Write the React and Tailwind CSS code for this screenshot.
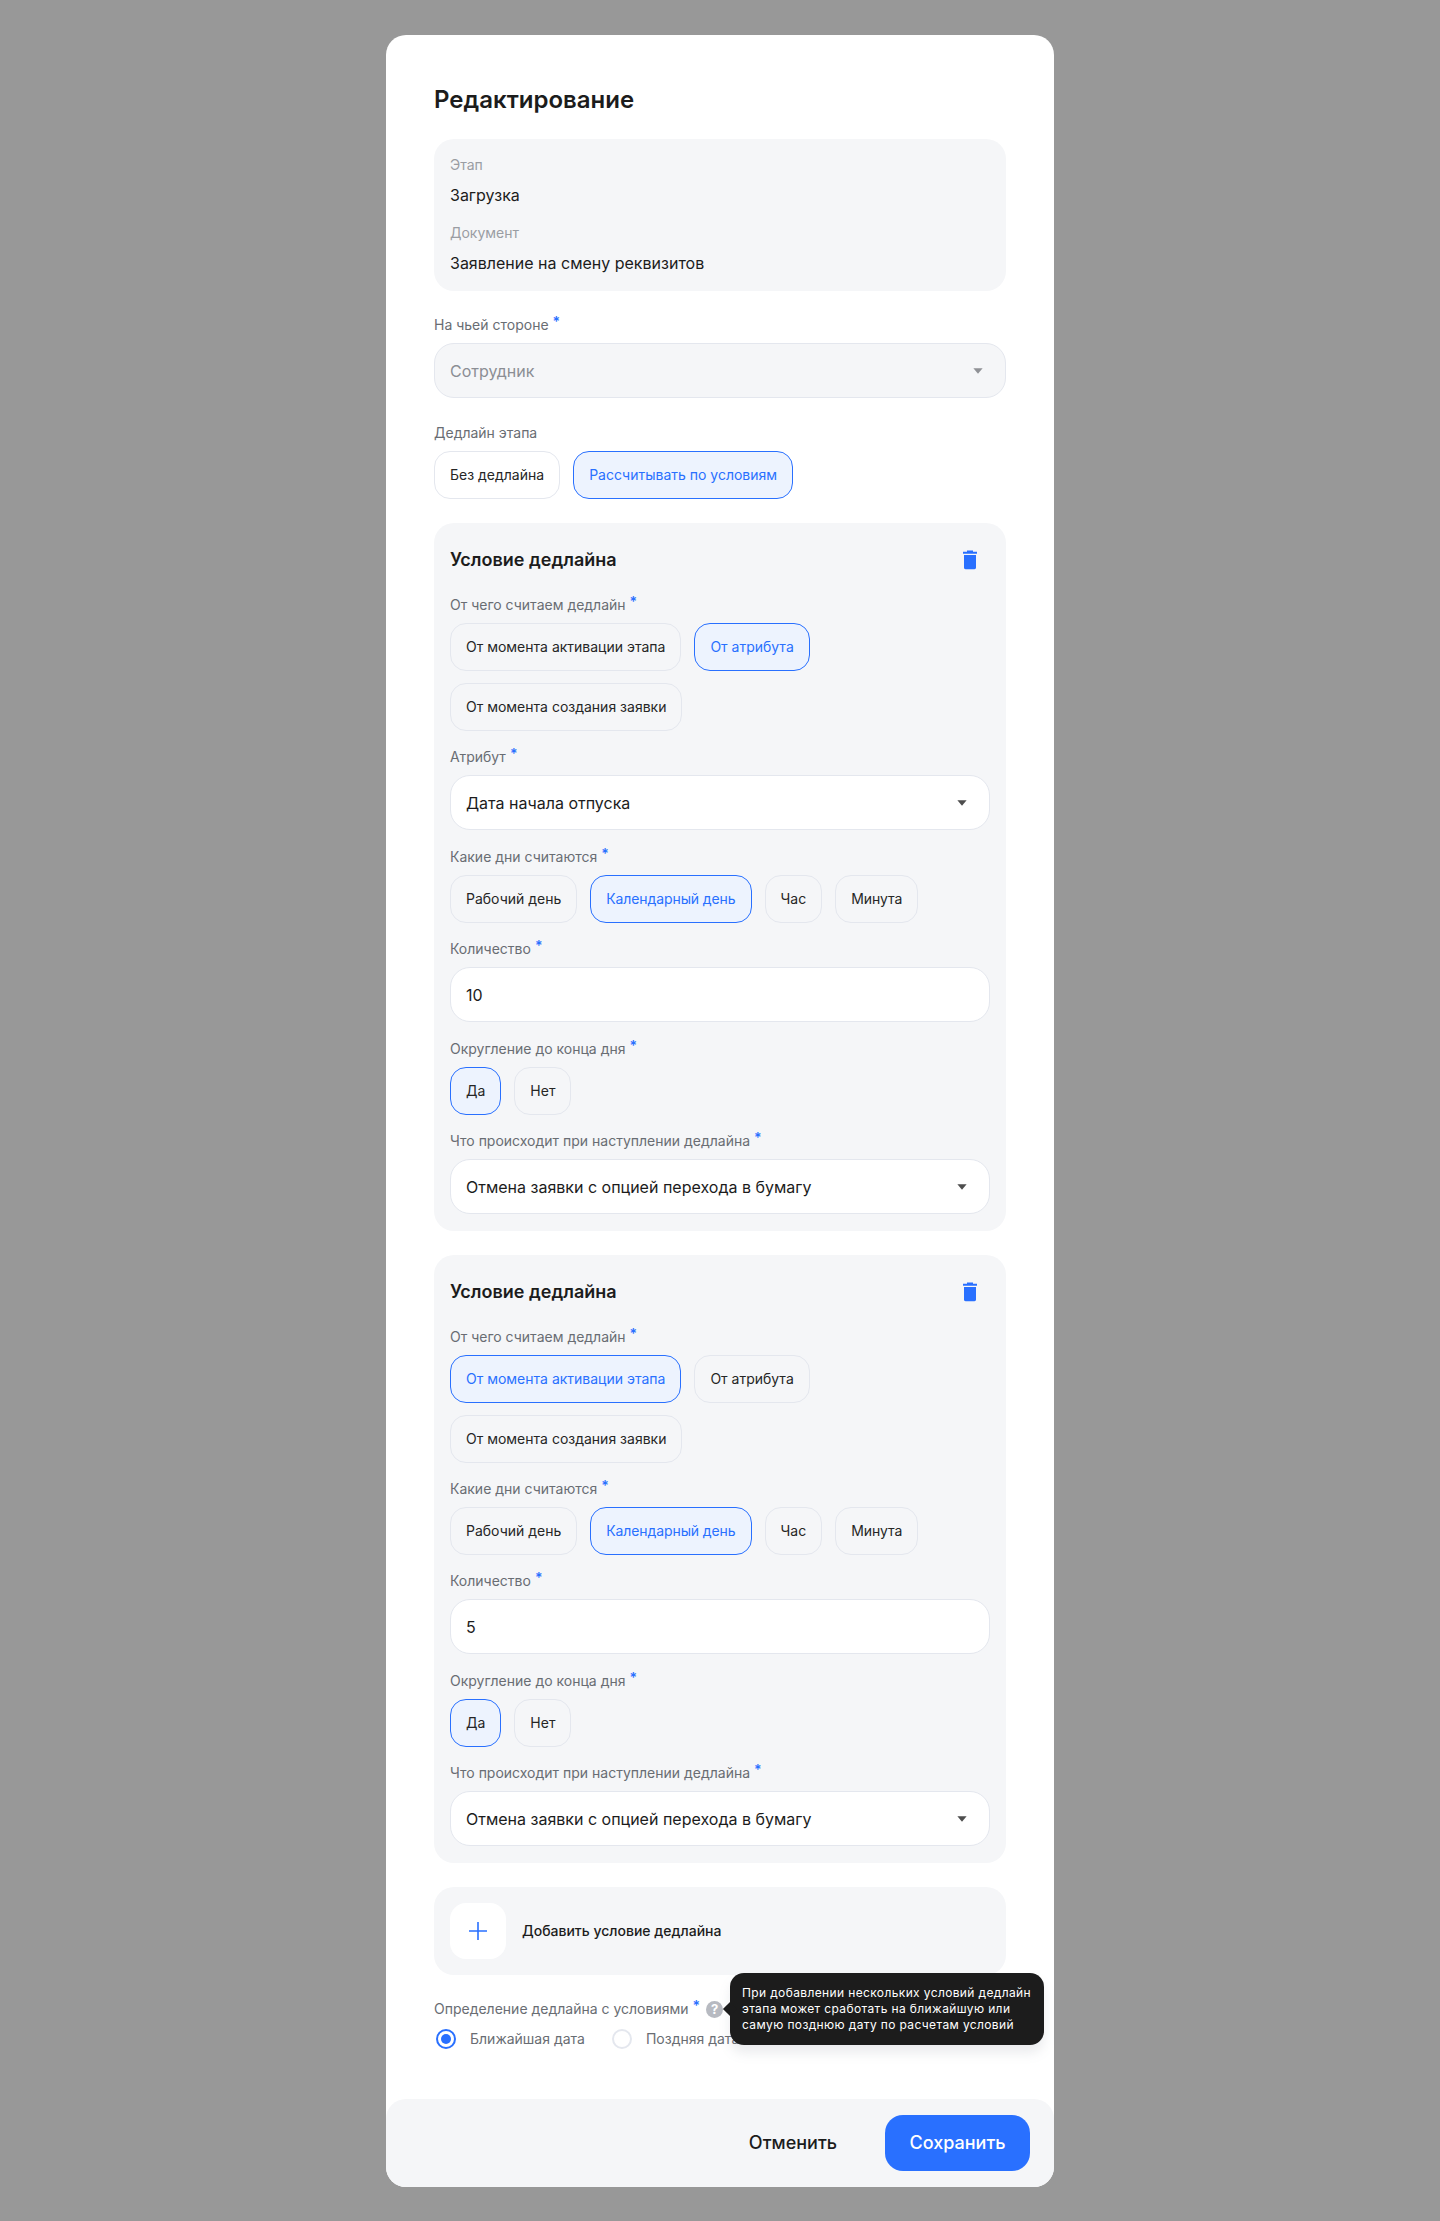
import React from "react";

const font = { fontFamily: '"Inter", "Liberation Sans", sans-serif' };

function Label({ children, className = "" }) {
  return (
    <div className={"flex h-5 items-center text-[14px] leading-5 text-[#696d73] " + className}>
      <span>{children}</span>
      <span className="ml-1 self-start text-[14px] leading-[14px] font-semibold text-[#2970ff]">*</span>
    </div>
  );
}

function Chip({ children, active, dark, white, className = "" }) {
  const cls = active
    ? "border-[#2970ff] bg-[#edf3fe] " + (dark ? "text-[#262626]" : "text-[#2970ff]")
    : "border-[#e4e7ee] text-[#262626] " + (white ? "bg-white" : "bg-transparent");
  return (
    <div className={"flex h-12 items-center rounded-2xl border px-[15px] text-[14px] leading-5 " + cls + " " + className}>
      {children}
    </div>
  );
}

function Triangle({ color = "#4d4d4d" }) {
  return (
    <svg width="10" height="6" viewBox="0 0 10 6" className="shrink-0">
      <path d="M0.4 0.3H9.6L5 5.7Z" fill={color} />
    </svg>
  );
}

function Select({ value }) {
  return (
    <div className="mt-2 mb-[17px] flex h-[55px] items-center justify-between rounded-[20px] border border-[#e4e7ee] bg-white pl-[15px] pr-[22px] text-[16px] leading-6 text-[#1c1c1c]">
      <span>{value}</span>
      <Triangle />
    </div>
  );
}

function Trash() {
  return (
    <svg width="16" height="20" viewBox="0 0 16 20" className="mr-3">
      <path
        d="M5 0.6H11V1.8H15V3.8H1V1.8H5ZM2 5H14V17.6C14 18.6 13.4 19.2 12.4 19.2H3.6C2.6 19.2 2 18.6 2 17.6Z"
        fill="#2970ff"
      />
    </svg>
  );
}

function Condition({ attribute, amount, source }) {
  return (
    <section className="rounded-[20px] bg-[#f5f6f8] px-4 pt-6">
      <div className="mb-[22px] flex h-[26px] items-center justify-between">
        <h2 className="text-[18px] leading-[26px] font-semibold text-[#1c1c1c]">Условие дедлайна</h2>
        <Trash />
      </div>
      <Label>От чего считаем дедлайн</Label>
      <div className="mt-2 mb-4 flex flex-wrap gap-x-[13px] gap-y-3">
        <Chip active={source === "stage"}>От момента активации этапа</Chip>
        <Chip active={source === "attr"}>От атрибута</Chip>
        <Chip>От момента создания заявки</Chip>
      </div>
      {attribute && (
        <>
          <Label>Атрибут</Label>
          <Select value={attribute} />
        </>
      )}
      <Label>Какие дни считаются</Label>
      <div className="mt-2 mb-4 flex gap-[13px]">
        <Chip>Рабочий день</Chip>
        <Chip active className="tracking-[-0.1px]">Календарный день</Chip>
        <Chip>Час</Chip>
        <Chip className="tracking-[-0.1px]">Минута</Chip>
      </div>
      <Label>Количество</Label>
      <div className="mt-2 mb-[17px] flex h-[55px] items-center rounded-[20px] border border-[#e4e7ee] bg-white px-[15px] text-[16px] leading-6 text-[#1c1c1c]">
        {amount}
      </div>
      <Label>Округление до конца дня</Label>
      <div className="mt-2 mb-4 flex gap-[13px]">
        <Chip active dark>Да</Chip>
        <Chip>Нет</Chip>
      </div>
      <Label>Что происходит при наступлении дедлайна</Label>
      <Select value="Отмена заявки с опцией перехода в бумагу" />
    </section>
  );
}

function Radio({ checked, children }) {
  return (
    <div className="flex items-center gap-[14px]">
      <span
        className={
          "flex h-5 w-5 items-center justify-center rounded-full border-2 " +
          (checked ? "border-[#2970ff]" : "border-[#e4e7ee]")
        }
      >
        {checked && <span className="h-[10px] w-[10px] rounded-full bg-[#2970ff]" />}
      </span>
      <span className="text-[14px] leading-5 text-[#696d73]">{children}</span>
    </div>
  );
}

export default function App() {
  return (
    <div style={font} className="h-[2221px] bg-[#989898] pt-[35px]">
      <div className="ml-[386px] flex h-[2152px] w-[668px] flex-col rounded-[20px] bg-white">
        <div className="px-12 pt-12">
          <h1 className="text-[24px] leading-[34px] font-semibold text-[#1c1c1c]">Редактирование</h1>

          <div className="mt-[22px] h-[152px] rounded-[20px] bg-[#f5f6f8] px-4 pt-4">
            <div className="text-[14px] leading-5 text-[#9a9da3]">Этап</div>
            <div className="mt-[9px] text-[16px] leading-[22px] text-[#1c1c1c]">Загрузка</div>
            <div className="mt-[17px] text-[14px] leading-5 text-[#9a9da3]">Документ</div>
            <div className="mt-[9px] text-[16px] leading-[22px] text-[#1c1c1c]">Заявление на смену реквизитов</div>
          </div>

          <Label className="mt-6">На чьей стороне</Label>
          <div className="mt-2 flex h-[55px] items-center justify-between rounded-[20px] border border-[#e4e7ee] bg-[#f5f6f8] pl-[15px] pr-[22px] text-[16px] leading-6 text-[#8b8e94]">
            <span>Сотрудник</span>
            <Triangle color="#8f9196" />
          </div>

          <div className="mt-[25px] h-5 text-[14px] leading-5 text-[#696d73]">Дедлайн этапа</div>
          <div className="mt-2 flex gap-[13px]">
            <Chip white>Без дедлайна</Chip>
            <Chip active>Рассчитывать по условиям</Chip>
          </div>

          <div className="mt-6 flex flex-col gap-6">
            <Condition source="attr" attribute="Дата начала отпуска" amount="10" />
            <Condition source="stage" amount="5" />
          </div>

          <div className="mt-6 flex h-[88px] items-center gap-4 rounded-[20px] bg-[#f5f6f8] px-4">
            <div className="flex h-14 w-14 items-center justify-center rounded-2xl bg-white">
              <svg width="20" height="20" viewBox="0 0 20 20">
                <path d="M10 1V19M1 10H19" stroke="#2970ff" strokeWidth="1.6" fill="none" />
              </svg>
            </div>
            <span className="text-[14px] leading-5 font-medium text-[#1c1c1c]">Добавить условие дедлайна</span>
          </div>

          <div className="relative mt-6">
            <div className="flex h-5 items-center">
              <Label>Определение дедлайна с условиями</Label>
              <span className="ml-[6px] flex h-[17px] w-[17px] items-center justify-center rounded-full bg-[#b7bac1] text-[13px] leading-none font-bold text-white">
                ?
              </span>
            </div>
            <div className="mt-[10px] ml-[2px] flex gap-[27px]">
              <Radio checked>Ближайшая дата</Radio>
              <Radio>Поздняя дата</Radio>
            </div>
            <div className="absolute top-[-26px] left-[296px] w-[314px] rounded-[14px] bg-[#1c1c1c] p-3 text-[12px] leading-4 tracking-[0.37px] whitespace-nowrap text-white shadow-[0_8px_12px_rgba(120,125,140,0.15)]">
              <span className="absolute top-[31px] left-[-5px] h-[10px] w-[10px] rotate-45 bg-[#1c1c1c]" />
              <div>При добавлении нескольких условий дедлайн</div>
              <div>этапа может сработать на ближайшую или</div>
              <div>самую позднюю дату по расчетам условий</div>
            </div>
          </div>
        </div>

        <div className="mt-auto flex h-[88px] items-center justify-end rounded-[20px] bg-[#f5f6f8] pr-6">
          <span className="mr-[48px] text-[18px] leading-6 font-medium text-[#1c1c1c]">Отменить</span>
          <div className="flex h-14 w-[145px] items-center justify-center rounded-[18px] bg-[#2970ff] text-[18px] leading-6 font-medium text-white">
            Сохранить
          </div>
        </div>
      </div>
    </div>
  );
}
